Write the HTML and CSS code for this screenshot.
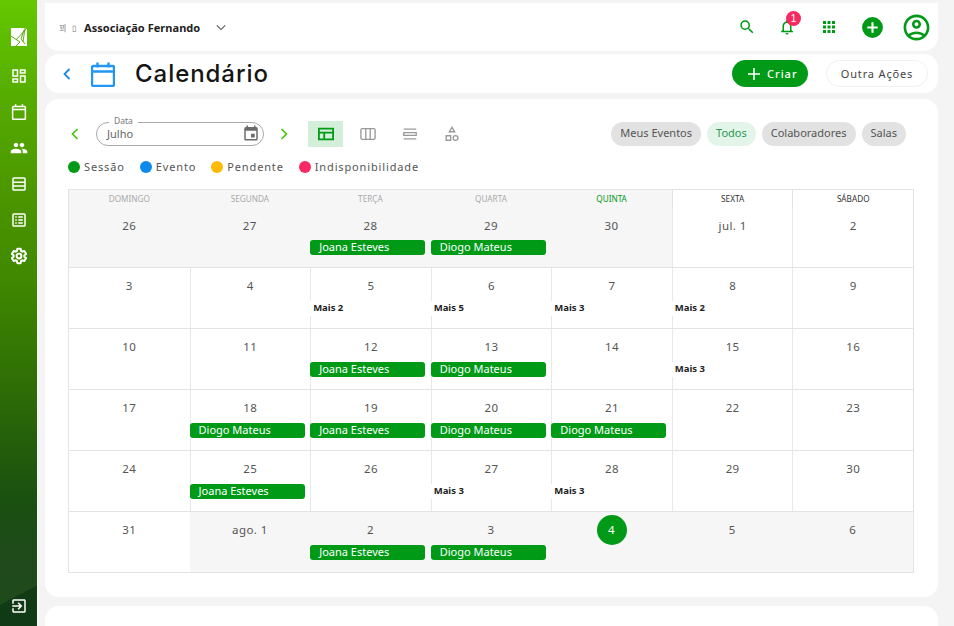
FILE: index.html
```html
<!DOCTYPE html>
<html lang="pt">
<head>
<meta charset="utf-8">
<title>Calendário</title>
<link rel="stylesheet" href="styles.css">
</head>
<body>
<div class="app">
  <aside class="side">
    <svg class="logo" viewBox="0 0 16 18"><path fill="#fff" d="M0 0h16v18H0z"/><path fill="none" stroke="#4f9f00" stroke-width=".9" d="M0 8l9 6M16 0L5 12M13 2l-3 9 4 5M9 14l-4 4M14 0l-2 14"/></svg>
    <svg class="nav n1" viewBox="0 0 24 24"><path d="M19 5v2h-4V5h4M9 5v6H5V5h4m10 8v6h-4v-6h4M9 17v2H5v-2h4M21 3h-8v6h8V3zM11 3H3v10h8V3zm10 8h-8v10h8V11zm-10 4H3v6h8v-6z"/></svg>
    <svg class="nav line" viewBox="0 0 24 24"><path d="M4.500 4.500h15a1 1 0 0 1 1 1v15a1 1 0 0 1-1 1h-15a1 1 0 0 1-1-1v-15a1 1 0 0 1 1-1zM3.500 8.500h17M7.500 1.500v4M16.500 1.500v4"/></svg>
    <svg class="nav" viewBox="0 0 24 24"><path d="M16 11c1.660 0 2.990-1.340 2.990-3S17.660 5 16 5c-1.660 0-3 1.340-3 3s1.340 3 3 3zm-8 0c1.660 0 2.990-1.340 2.990-3S9.660 5 8 5C6.340 5 5 6.340 5 8s1.340 3 3 3zm0 2c-2.330 0-7 1.170-7 3.500V19h14v-2.500c0-2.330-4.670-3.500-7-3.500zm8 0c-.29 0-.62.02-.97.05 1.160.84 1.970 1.970 1.970 3.450V19h6v-2.500c0-2.330-4.670-3.500-7-3.500z"/></svg>
    <svg class="nav" viewBox="0 0 24 24"><path d="M5 3h14a2 2 0 0 1 2 2v14a2 2 0 0 1-2 2H5a2 2 0 0 1-2-2V5a2 2 0 0 1 2-2zm0 2v3.500h14V5H5zm0 5.500v3h14v-3H5zm0 5V19h14v-3.500H5z"/></svg>
    <svg class="nav" viewBox="0 0 24 24"><path d="M5 3h14a2 2 0 0 1 2 2v14a2 2 0 0 1-2 2H5a2 2 0 0 1-2-2V5a2 2 0 0 1 2-2zm0 2v14h14V5H5zm2 2h2v2H7V7zm4 0h6v2h-6V7zm-4 4h2v2H7v-2zm4 0h6v2h-6v-2zm-4 4h2v2H7v-2zm4 0h6v2h-6v-2z"/></svg>
    <svg class="nav line gear" viewBox="0 0 24 24"><path d="M19.140 12.940c.04-.3.06-.61.06-.94 0-.32-.02-.64-.07-.94l2.030-1.580c.18-.14.23-.41.12-.61l-1.920-3.320c-.12-.22-.37-.29-.59-.22l-2.390.96c-.5-.38-1.030-.7-1.620-.94l-.36-2.540c-.04-.24-.24-.41-.48-.41h-3.840c-.24 0-.43.17-.47.41l-.36 2.540c-.59.24-1.130.57-1.620.94l-2.390-.96c-.22-.08-.47 0-.59.22L2.740 8.870c-.12.21-.08.47.12.61l2.030 1.580c-.05.3-.09.63-.09.94s.02.64.07.94l-2.030 1.580c-.18.14-.23.41-.12.61l1.920 3.320c.12.22.37.29.59.22l2.390-.96c.5.38 1.030.7 1.620.94l.36 2.540c.05.24.24.41.48.41h3.840c.24 0 .44-.17.47-.41l.36-2.540c.59-.24 1.130-.56 1.620-.94l2.390.96c.22.08.47 0 .59-.22l1.920-3.320c.12-.22.07-.47-.12-.61l-2.010-1.580z"/><circle cx="12" cy="12" r="3.200"/></svg>
    <svg class="nav exit" viewBox="0 0 24 24"><path d="M10.090 15.590L11.500 17l5-5-5-5-1.410 1.410L12.670 11H3v2h9.670l-2.580 2.590zM19 3H5c-1.110 0-2 .9-2 2v4h2V5h14v14H5v-4H3v4c0 1.100.89 2 2 2h14c1.100 0 2-.9 2-2V5c0-1.100-.9-2-2-2z"/></svg>
  </aside>
  <main class="main">
    <header class="card topbar">
      <span class="org-mark">꾀 ▯</span>
      <span class="org">Associação Fernando</span>
      <svg class="org-chev" viewBox="0 0 12 8"><path d="M1 1.500l5 5 5-5"/></svg>
      <div class="top-icons">
        <svg class="ti search" viewBox="0 0 24 24"><path d="M15.500 14h-.79l-.28-.27A6.471 6.471 0 0 0 16 9.500 6.500 6.500 0 1 0 9.500 16c1.610 0 3.090-.59 4.230-1.570l.27.28v.79l5 4.990L20.490 19l-4.990-5zm-6 0C7.010 14 5 11.990 5 9.500S7.010 5 9.500 5 14 7.010 14 9.500 11.990 14 9.500 14z"/></svg>
        <span class="bell">
          <svg class="ti" viewBox="0 0 24 24"><path d="M12 22c1.100 0 2-.9 2-2h-4c0 1.100.9 2 2 2zm6-6v-5c0-3.070-1.630-5.640-4.500-6.320V4c0-.83-.67-1.500-1.500-1.500s-1.500.67-1.500 1.500v.68C7.640 5.360 6 7.920 6 11v5l-2 2v1h16v-1l-2-2zm-2 1H8v-6c0-2.480 1.510-4.500 4-4.500s4 2.020 4 4.500v6z"/></svg>
          <span class="badge">1</span>
        </span>
        <svg class="ti apps" viewBox="0 0 24 24"><path d="M4 8h4V4H4v4zm6 12h4v-4h-4v4zm-6 0h4v-4H4v4zm0-6h4v-4H4v4zm6 0h4v-4h-4v4zm6-10v4h4V4h-4zm-6 4h4V4h-4v4zm6 6h4v-4h-4v4zm0 6h4v-4h-4v4z"/></svg>
        <svg class="ti big" viewBox="0 0 24 24"><path d="M12 2a10 10 0 1 0 0 20 10 10 0 0 0 0-20zm5 11h-4v4h-2v-4H7v-2h4V7h2v4h4v2z"/></svg>
        <svg class="ti huge" viewBox="0 0 24 24"><path d="M12 2C6.480 2 2 6.480 2 12s4.480 10 10 10 10-4.480 10-10S17.520 2 12 2zM7.350 18.500C8.660 17.560 10.260 17 12 17s3.340.56 4.650 1.500C15.340 19.440 13.740 20 12 20s-3.340-.56-4.650-1.500zm10.790-1.380C16.450 15.800 14.320 15 12 15s-4.450.8-6.140 2.120C4.700 15.730 4 13.950 4 12c0-4.420 3.580-8 8-8s8 3.580 8 8c0 1.950-.7 3.730-1.860 5.120zM12 6c-1.930 0-3.500 1.570-3.500 3.500S10.070 13 12 13s3.500-1.570 3.500-3.500S13.930 6 12 6zm0 5c-.83 0-1.500-.67-1.500-1.500S11.170 8 12 8s1.500.67 1.500 1.500S12.830 11 12 11z"/></svg>
      </div>
    </header>

    <section class="card titlebar">
      <svg class="back" viewBox="0 0 8 12"><path d="M6.500 1l-5 5 5 5"/></svg>
      <svg class="title-ico" viewBox="0 0 24 26"><path d="M2.500 5h19a1.500 1.500 0 0 1 1.500 1.500v17a1.500 1.500 0 0 1-1.500 1.500h-19A1.500 1.500 0 0 1 1 23.500v-17A1.500 1.500 0 0 1 2.500 5zM1 10.500h22M6.500 1.500v5M17.500 1.500v5"/></svg>
      <h1 class="title">Calendário</h1>
      <button class="btn-create"><svg viewBox="0 0 12 12"><path d="M6 0v12M0 6h12"/></svg>Criar</button>
      <button class="btn-other">Outra Ações</button>
    </section>

    <section class="card panel">
      <div class="toolbar">
        <svg class="arrow" viewBox="0 0 8 12"><path d="M6.500 1l-5 5 5 5"/></svg>
        <div class="field">
          <span class="field-label">Data</span>
          <span class="field-value">Julho</span>
          <svg class="field-ico" viewBox="0 0 24 24"><path d="M17 13h-5v5h5v-5zM16 2v2H8V2H6v2H5a2 2 0 0 0-2 2v14a2 2 0 0 0 2 2h14a2 2 0 0 0 2-2V6a2 2 0 0 0-2-2h-1V2h-2zm3 18H5V9h14v11z"/></svg>
        </div>
        <svg class="arrow next" viewBox="0 0 8 12"><path d="M1.500 1l5 5-5 5"/></svg>
        <div class="views">
          <span class="view on"><svg viewBox="0 0 18 14"><path d="M1 1h16v12H1zM1 5.500h16M7 5.500V13"/></svg></span>
          <span class="view"><svg viewBox="0 0 18 14"><path d="M2.500 1h13A1.500 1.500 0 0 1 17 2.500v9a1.500 1.500 0 0 1-1.500 1.500h-13A1.500 1.500 0 0 1 1 11.500v-9A1.500 1.500 0 0 1 2.500 1zM6.500 1v12M11.500 1v12"/></svg></span>
          <span class="view"><svg viewBox="0 0 18 14"><path d="M2 1.500h14M2 5.500h14v3H2zM2 12.500h14"/></svg></span>
          <span class="view"><svg viewBox="0 0 18 18"><path d="M9 1.500l3 5H6zM2.500 11h5v5h-5z"/><circle cx="13" cy="13.500" r="2.700"/></svg></span>
        </div>
        <div class="chips">
          <span class="chip">Meus Eventos</span>
          <span class="chip active">Todos</span>
          <span class="chip">Colaboradores</span>
          <span class="chip">Salas</span>
        </div>
      </div>

      <div class="legend">
        <span class="lg"><i class="dot green"></i>Sessão</span>
        <span class="lg"><i class="dot blue"></i>Evento</span>
        <span class="lg"><i class="dot amber"></i>Pendente</span>
        <span class="lg"><i class="dot pink"></i>Indisponibilidade</span>
      </div>

      <div class="cal">
        <div class="wd mute">DOMINGO</div><div class="wd mute">SEGUNDA</div><div class="wd mute">TERÇA</div><div class="wd mute">QUARTA</div><div class="wd mute today">QUINTA</div><div class="wd">SEXTA</div><div class="wd">SÁBADO</div>

        <div class="day out"><span class="num">26</span></div>
        <div class="day out"><span class="num">27</span></div>
        <div class="day out"><span class="num">28</span><span class="ev">Joana Esteves</span></div>
        <div class="day out"><span class="num">29</span><span class="ev">Diogo Mateus</span></div>
        <div class="day out"><span class="num">30</span></div>
        <div class="day"><span class="num">jul. 1</span></div>
        <div class="day"><span class="num">2</span></div>

        <div class="day"><span class="num">3</span></div>
        <div class="day"><span class="num">4</span></div>
        <div class="day"><span class="num">5</span><span class="more">Mais 2</span></div>
        <div class="day"><span class="num">6</span><span class="more">Mais 5</span></div>
        <div class="day"><span class="num">7</span><span class="more">Mais 3</span></div>
        <div class="day"><span class="num">8</span><span class="more">Mais 2</span></div>
        <div class="day"><span class="num">9</span></div>

        <div class="day"><span class="num">10</span></div>
        <div class="day"><span class="num">11</span></div>
        <div class="day"><span class="num">12</span><span class="ev">Joana Esteves</span></div>
        <div class="day"><span class="num">13</span><span class="ev">Diogo Mateus</span></div>
        <div class="day"><span class="num">14</span></div>
        <div class="day"><span class="num">15</span><span class="more">Mais 3</span></div>
        <div class="day"><span class="num">16</span></div>

        <div class="day"><span class="num">17</span></div>
        <div class="day"><span class="num">18</span><span class="ev">Diogo Mateus</span></div>
        <div class="day"><span class="num">19</span><span class="ev">Joana Esteves</span></div>
        <div class="day"><span class="num">20</span><span class="ev">Diogo Mateus</span></div>
        <div class="day"><span class="num">21</span><span class="ev">Diogo Mateus</span></div>
        <div class="day"><span class="num">22</span></div>
        <div class="day"><span class="num">23</span></div>

        <div class="day"><span class="num">24</span></div>
        <div class="day"><span class="num">25</span><span class="ev">Joana Esteves</span></div>
        <div class="day"><span class="num">26</span></div>
        <div class="day"><span class="num">27</span><span class="more">Mais 3</span></div>
        <div class="day"><span class="num">28</span><span class="more">Mais 3</span></div>
        <div class="day"><span class="num">29</span></div>
        <div class="day"><span class="num">30</span></div>

        <div class="day end"><span class="num">31</span></div>
        <div class="day end out"><span class="num">ago. 1</span></div>
        <div class="day end out"><span class="num">2</span><span class="ev">Joana Esteves</span></div>
        <div class="day end out"><span class="num">3</span><span class="ev">Diogo Mateus</span></div>
        <div class="day end out"><span class="num now">4</span></div>
        <div class="day end out"><span class="num">5</span></div>
        <div class="day end out"><span class="num">6</span></div>
      </div>
    </section>

    <section class="card tail"></section>
  </main>
</div>
</body>
</html>
```

FILE: styles.css
```css
* { box-sizing: border-box; }
html, body { margin: 0; height: 100%; overflow: hidden; }
body { background: #f4f4f4; font-family: "Noto Sans", "Open Sans", sans-serif; color: #555; }
.app { display: flex; height: 626px; overflow: hidden; }

/* sidebar */
.side {
  width: 37px; flex: none; display: flex; flex-direction: column; align-items: center;
  box-shadow: 1px 0 0 #fbfbfb;
  background:
    linear-gradient(152deg, transparent 93.7%, rgba(8, 48, 16, .6) 93.7%),
    linear-gradient(180deg, #64c800 0, #55ab00 16%, #4a9400 33%, #3f8800 45%, #2f6e05 61%, #1a5010 80%, #204a1c 90%, #1c4a1c 100%);
}
.logo { width: 16px; height: 18px; margin-top: 28px; }
.nav { width: 18px; height: 18px; fill: #fff; margin-top: 18px; flex: none; }
.nav.line { fill: none; stroke: #fff; stroke-width: 2; }
.nav.gear { stroke-width: 2.600; }
.n1 { margin-top: 21px; }
.exit { margin-top: auto; margin-bottom: 11px; }

/* layout */
.main { flex: 1; min-width: 0; padding: 3px 16px 0 8px; display: flex; flex-direction: column; }
.card { background: #fff; flex: none; }

/* top bar */
.topbar { height: 48px; border-radius: 0 0 14px 14px; display: flex; align-items: center; padding: 0 6px 0 14px; }
.org-mark { font-size: 8px; color: #777; width: 25px; white-space: nowrap; word-spacing: 4px; font-family: "Noto Sans CJK KR", "Noto Sans", sans-serif; }
.org { font-size: 11px; font-weight: 700; color: #222; letter-spacing: .05px; }
.org-chev { width: 10px; height: 7px; margin-left: 16px; fill: none; stroke: #555; stroke-width: 1.300; }
.top-icons { margin-left: auto; display: flex; align-items: center; }
.ti { width: 18px; height: 18px; fill: #009a17; display: block; flex: none; }
.search { margin-right: 22px; }
.apps { margin-left: 24px; }
.bell { position: relative; display: block; }
.badge {
  position: absolute; top: -7px; left: 8px; width: 15px; height: 15px; border-radius: 50%;
  background: #f72a63; color: #fff; font: 400 10px/15px "Liberation Sans", sans-serif; text-align: center;
}
.big { width: 25px; height: 25px; margin-left: 22px; }
.huge { width: 31px; height: 31px; margin-left: 16px; }

/* title bar */
.titlebar { height: 39px; margin-top: 3px; border-radius: 14px; display: flex; align-items: center; padding: 0 10px 0 18px; }
.back { width: 8px; height: 12px; fill: none; stroke: #1e88e5; stroke-width: 1.800; }
.title-ico { width: 24px; height: 26px; margin-left: 20px; fill: none; stroke: #2196f3; stroke-width: 2.400; }
.title { margin: 0 0 0 20px; font: 500 24px/1 "Inter", sans-serif; color: #151515; letter-spacing: .95px; }
.btn-create {
  margin-left: auto; width: 76px; height: 27px; padding: 0 0 0 16px; border: 0; border-radius: 14px; background: #009a17; color: #fff;
  font: 500 11px "Noto Sans", sans-serif; letter-spacing: 1px; display: flex; align-items: center; gap: 7px;
}
.btn-create svg { width: 12px; height: 12px; fill: none; stroke: #fff; stroke-width: 1.600; }
.btn-other {
  margin-left: 18px; width: 102px; height: 27px; border: 1px solid #f1f1f1; border-radius: 14px; background: #fff; color: #444;
  font: 400 11px "Noto Sans", sans-serif; letter-spacing: .85px;
}

/* panel */
.panel { height: 498px; margin-top: 6px; border-radius: 14px; padding: 23px 24px 0 23px; }
.toolbar { display: flex; align-items: center; height: 24px; }
.arrow { width: 8px; height: 12px; margin-left: 3px; fill: none; stroke: #45c000; stroke-width: 1.600; flex: none; }
.next { margin-left: 16px; }
.field { position: relative; width: 168px; height: 24px; margin-left: 17px; padding: 0 3px 2px 10px; border: 1px solid #a9a9a9; border-radius: 12px; display: flex; align-items: center; }
.field-label { position: absolute; top: -8px; left: 12px; padding: 0 5px; background: #fff; font-size: 8.500px; line-height: 11px; color: #777; }
.field-value { font-size: 11px; color: #666; }
.field-ico { width: 18px; height: 18px; margin-left: auto; fill: #6c6c6c; }
.views { display: flex; align-items: center; margin-left: 20px; gap: 7px; }
.view { width: 35px; height: 26px; display: flex; align-items: center; justify-content: center; }
.view.on { background: #d4efd9; }
.view svg { width: 16px; height: 14px; fill: none; stroke: #999; stroke-width: 1.500; }
.view:last-child svg { height: 16px; }
.view.on svg { stroke: #009a17; stroke-width: 2; }
.chips { margin: 0 8px 0 auto; display: flex; gap: 6px; }
.chip { height: 24px; padding: 0 9px; border-radius: 12px; background: #e2e2e2; color: #555; font-size: 11px; line-height: 22px; }
.chip.active { background: #e2f5e8; color: #2b9a55; }

.legend { display: flex; margin-top: 13px; height: 16px; align-items: center; gap: 15px; }
.lg { display: flex; align-items: center; gap: 4px; height: 16px; font-size: 11px; line-height: 14px; letter-spacing: .86px; color: #555; }
.dot { width: 12px; height: 12px; border-radius: 50%; }
.green { background: #009a17; }
.blue { background: #0d8bec; }
.amber { background: #ffb900; }
.pink { background: #f72a63; }

/* calendar */
.cal {
  margin-top: 14px; width: 846px; border: 1px solid #e3e3e3;
  display: grid; grid-template-columns: repeat(7, 1fr); grid-template-rows: 18px 60px repeat(4, 61px) 60px;
}
.wd { background: #fff; text-align: center; font-size: 8.200px; line-height: 18px; color: #333; border-left: 1px solid #e3e3e3; }
.wd.mute { background: #f6f6f6; color: #aaa; border-left: 0; }
.wd.today { color: #009a17; }
.day { position: relative; border-left: 1px solid #e8e8e8; border-bottom: 1px solid #e3e3e3; background: #fff; min-width: 0; }
.day:nth-child(7n+1) { border-left: 0; }
.day.out { background: #f6f6f6; border-left: 0; }
.day.end { border-bottom: 0; }
.num { display: block; height: 30px; padding-top: 10px; text-align: center; font-size: 11.500px; line-height: 16px; color: #555; letter-spacing: .4px; }
.ev {
  position: absolute; left: -1px; top: 33px; width: 115px; height: 15px; padding-left: 9px; border-radius: 3px;
  background: #009a17; color: #fff; font-size: 11px; line-height: 14px; white-space: nowrap;
}
.day.out .ev { left: 0; top: 32px; }
.day.end.out .ev { top: 33px; }
.more {
  position: absolute; left: -1px; top: 33px; width: 100%; height: 15px; padding-left: 3px; background: #fff;
  font-size: 9.500px; font-weight: 700; line-height: 14px; color: #222; white-space: nowrap;
}
.num.now { width: 30px; height: 30px; margin: 3px auto 0; padding: 0; border-radius: 50%; background: #009a17; color: #fff; line-height: 30px; }

.tail { margin-top: 9px; height: 40px; border-radius: 14px; }
```
